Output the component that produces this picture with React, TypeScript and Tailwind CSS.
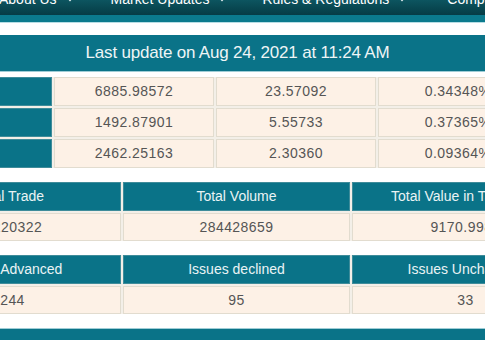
import React from "react";

const font = { fontFamily: '"Liberation Sans", Arial, sans-serif' };

function Caret() {
  return (
    <svg width="8" height="5" viewBox="0 0 8 5" className="ml-[9px] mt-[1px]">
      <path d="M0.5 0.5 L7.5 0.5 L4 4.5 Z" fill="#e8f2f4" />
    </svg>
  );
}

function NavItem({ label, ml }: { label: string; ml: string }) {
  return (
    <div className={`flex items-center shrink-0 ${ml}`}>
      <span>{label}</span>
      <Caret />
    </div>
  );
}

const T = "bg-[#0a7388]";
const C = "bg-[#fdf1e6]";

function TealCell({ children }: { children?: React.ReactNode }) {
  return (
    <div className={`${T} border border-[#3f8c9a] flex items-center justify-center text-[14px] text-[#eaf3f5] whitespace-nowrap overflow-visible`}>
      {children}
    </div>
  );
}

function CreamCell({ children, extra = "" }: { children?: React.ReactNode; extra?: string }) {
  return (
    <div className={`${C} border border-[#e2dccf] flex items-center justify-center text-[14px] text-[#555555] tracking-[0.45px] whitespace-nowrap ${extra}`}>
      {children}
    </div>
  );
}

export default function App() {
  return (
    <div className="w-[485px] h-[340px] overflow-hidden bg-white relative" style={font}>
      {/* top nav */}
      <div className="h-[15px] overflow-hidden bg-gradient-to-b from-[#0d5560] to-[#063c45]">
        <div className="flex items-center -mt-[9px] h-[16px] leading-[16px] text-[14px] text-white whitespace-nowrap">
          <NavItem label="About Us" ml="-ml-[1px]" />
          <NavItem label="Market Updates" ml="ml-[37px]" />
          <NavItem label="Rules & Regulations" ml="ml-[36px]" />
          <div className="ml-[41px] shrink-0">Company</div>
        </div>
      </div>
      <div className="h-[8px] bg-[#0b7a8d] border-b border-[#b7dde4]" />
      <div className="h-[12px]" />

      <div className="-ml-[102px] w-[679px]">
        {/* banner */}
        <div className={`h-[37px] ${T} border-b border-[#9fcdd6] flex items-center justify-center text-[17px] tracking-[-0.2px] text-[#eef5f6]`}>
          Last update on Aug 24, 2021 at 11:24 AM
        </div>
        <div className="h-[5px]" />

        {/* index table */}
        <div className="-ml-[6px] grid grid-cols-[160px_160px_160px_160px] auto-rows-[29px] gap-[2px] bg-[#f3efe8] w-max">
          <TealCell>DSEX</TealCell>
          <CreamCell>6885.98572</CreamCell>
          <CreamCell>23.57092</CreamCell>
          <CreamCell>0.34348%</CreamCell>
          <TealCell>DSES</TealCell>
          <CreamCell>1492.87901</CreamCell>
          <CreamCell>5.55733</CreamCell>
          <CreamCell>0.37365%</CreamCell>
          <TealCell>DS30</TealCell>
          <CreamCell>2462.25163</CreamCell>
          <CreamCell>2.30360</CreamCell>
          <CreamCell>0.09364%</CreamCell>
        </div>

        <div className="h-[14px]" />

        {/* trade table */}
        <div className="grid grid-cols-[223px_227px_227px] grid-rows-[29px_28px] gap-[2px] bg-[#f3efe8]">
          <TealCell>Total Trade</TealCell>
          <TealCell>Total Volume</TealCell>
          <TealCell>Total Value in Taka (mn)</TealCell>
          <CreamCell extra="pl-[16px]">220322</CreamCell>
          <CreamCell>284428659</CreamCell>
          <CreamCell>9170.9983</CreamCell>
        </div>

        <div className="h-[14px]" />

        {/* issues table */}
        <div className="grid grid-cols-[223px_227px_227px] grid-rows-[29px_28px] gap-[2px] bg-[#f3efe8]">
          <TealCell>Issues Advanced</TealCell>
          <TealCell>Issues declined</TealCell>
          <TealCell>Issues Unchanged</TealCell>
          <CreamCell extra="pl-[6px]">244</CreamCell>
          <CreamCell>95</CreamCell>
          <CreamCell>33</CreamCell>
        </div>

        <div className="h-[14px]" />
        <div className={`h-[20px] ${T} border-t border-[#9fcdd6]`} />
      </div>
    </div>
  );
}
